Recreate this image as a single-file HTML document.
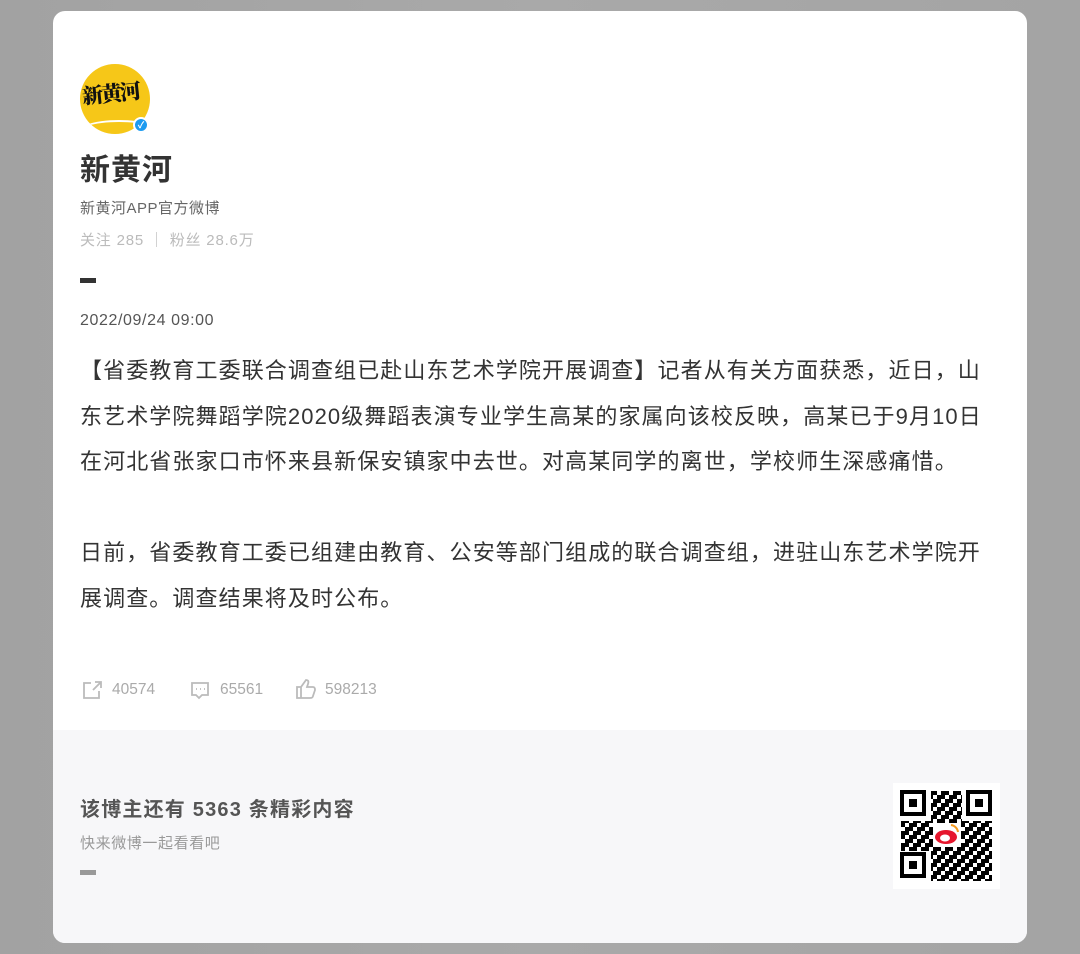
<!DOCTYPE html>
<html><head><meta charset="utf-8">
<style>
*{margin:0;padding:0;box-sizing:border-box}
body{width:1080px;height:954px;background:linear-gradient(90deg,#a2a2a2,#a9a9a9 50%,#a4a4a4);font-family:"Liberation Sans","Noto Sans CJK SC",sans-serif;position:relative;overflow:hidden}
.card{position:absolute;left:53px;top:11px;width:974px;height:932px;background:#fff;border-radius:12px;overflow:hidden}
.bot{position:absolute;left:0;top:719px;width:974px;height:213px;background:#f7f7f9}
.t{position:absolute;left:27px;white-space:nowrap}
</style></head><body>
<div class="card">
 <div style="position:absolute;left:27px;top:53px;width:70px;height:70px;border-radius:50%;background:#f6c718;overflow:hidden">
  <div style="position:absolute;left:-6px;top:56px;width:90px;height:30px;border-top:2px solid #fff;border-radius:50%"></div>
  <div style="position:absolute;left:2px;top:14px;font-family:'Noto Serif CJK SC',serif;font-size:21px;font-weight:900;color:#111;letter-spacing:-2px;transform:rotate(-6deg)">新黄河</div>
 </div>
 <div style="position:absolute;left:80px;top:106px;width:16px;height:16px;border-radius:50%;background:#1d9bf0;border:2px solid #fff;color:#fff;font-size:9px;line-height:12px;text-align:center;font-weight:bold">✓</div>
 <div class="t" style="top:134px;font-size:30px;font-weight:bold;color:#333;letter-spacing:1px">新黄河</div>
 <div class="t" style="top:186px;font-size:15px;color:#666;letter-spacing:0.5px">新黄河APP官方微博</div>
 <div class="t" style="top:218px;font-size:15px;color:#bbb;letter-spacing:0.8px">关注 285 ｜ 粉丝 28.6万</div>
 <div style="position:absolute;left:27px;top:267px;width:16px;height:5px;background:#333"></div>
 <div class="t" style="top:301px;font-size:16px;color:#555;letter-spacing:0.6px">2022/09/24 09:00</div>
 <div class="t" style="top:337px;font-size:22px;line-height:45.5px;color:#333;letter-spacing:1.1px">【省委教育工委联合调查组已赴山东艺术学院开展调查】记者从有关方面获悉，近日，山<br>东艺术学院舞蹈学院2020级舞蹈表演专业学生高某的家属向该校反映，高某已于9月10日<br>在河北省张家口市怀来县新保安镇家中去世。对高某同学的离世，学校师生深感痛惜。<br><br>日前，省委教育工委已组建由教育、公安等部门组成的联合调查组，进驻山东艺术学院开<br>展调查。调查结果将及时公布。</div>
 <svg style="position:absolute;left:29px;top:669px" width="22" height="20" viewBox="0 0 22 20" fill="none" stroke="#bbb" stroke-width="1.8"><path d="M9 3H2v15h15v-7M11 10l8-8M13 2h6v6"/></svg>
 <div class="t" style="left:59px;top:670px;font-size:15.5px;color:#aaa">40574</div>
 <svg style="position:absolute;left:137px;top:670px" width="22" height="20" viewBox="0 0 22 20" fill="none" stroke="#bbb" stroke-width="1.8"><path d="M2 2h16v12H12l-3 3-3-3H2z"/><path d="M6 8h1M10 8h1M14 8h1"/></svg>
 <div class="t" style="left:167px;top:670px;font-size:15.5px;color:#aaa">65561</div>
 <svg style="position:absolute;left:242px;top:667px" width="22" height="22" viewBox="0 0 22 22" fill="none" stroke="#bbb" stroke-width="1.8"><path d="M2 9h4v11H2zM6 9l5-7c2 0 3 1 2 4l-1 3h6c2 0 2 2 2 3l-2 6c0 1-1 2-3 2H6"/></svg>
 <div class="t" style="left:272px;top:670px;font-size:15.5px;color:#aaa">598213</div>
 <div class="bot">
  <div class="t" style="top:63px;font-size:20px;font-weight:bold;color:#555;letter-spacing:1.2px">该博主还有 5363 条精彩内容</div>
  <div class="t" style="top:102px;font-size:15px;color:#999;letter-spacing:0.6px">快来微博一起看看吧</div>
  <div style="position:absolute;left:27px;top:140px;width:16px;height:5px;background:#999"></div>
  <svg style="position:absolute;left:840px;top:53px" width="107" height="106" viewBox="0 0 107 106">
   <defs><pattern id="p" width="12" height="12" patternUnits="userSpaceOnUse"><rect width="12" height="12" fill="#fff"/><rect x="0" y="0" width="4" height="4" fill="#000"/><rect x="8" y="0" width="4" height="8" fill="#000"/><rect x="4" y="4" width="4" height="4" fill="#000"/><rect x="0" y="8" width="8" height="4" fill="#000"/></pattern></defs>
   <rect width="107" height="106" fill="#fff"/>
   <rect x="8" y="8" width="91" height="90" fill="url(#p)"/>
   <g fill="#fff"><rect x="6" y="6" width="32" height="32"/><rect x="69" y="6" width="32" height="32"/><rect x="6" y="68" width="32" height="32"/><rect x="40" y="40" width="28" height="24"/></g>
   <g fill="none" stroke="#000" stroke-width="4"><rect x="9" y="9" width="22" height="22"/><rect x="75" y="9" width="22" height="22"/><rect x="9" y="71" width="22" height="22"/></g>
   <g fill="#000"><rect x="16" y="16" width="8" height="8"/><rect x="82" y="16" width="8" height="8"/><rect x="16" y="78" width="8" height="8"/></g>
   <ellipse cx="53" cy="54" rx="11" ry="7" fill="#e6162d"/><ellipse cx="52" cy="55" rx="5" ry="3.5" fill="#fff"/><path d="M58 42a8 8 0 0 1 7 7" stroke="#f59a1d" stroke-width="2" fill="none"/>
  </svg>
 </div>
</div>
</body></html>
